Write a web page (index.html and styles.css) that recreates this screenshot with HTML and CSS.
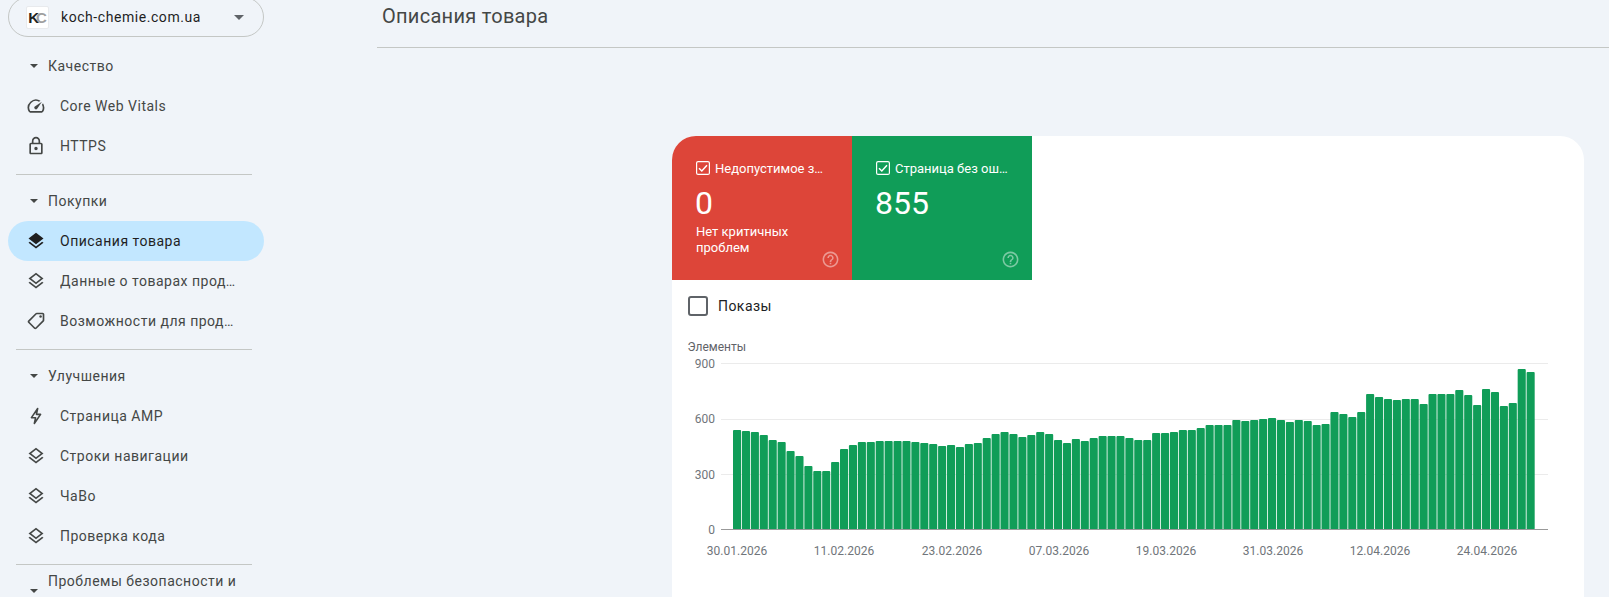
FILE: index.html
```html
<!DOCTYPE html>
<html lang="ru">
<head>
<meta charset="utf-8">
<title>Описания товара</title>
<link rel="stylesheet" href="styles.css">
</head>
<body>
<div class="page">
  <aside class="sidebar">
    <div class="property">
      <span class="logo"><b>K</b><i>C</i></span>
      <span class="property-name">koch-chemie.com.ua</span>
      <span class="property-caret"></span>
    </div>
    <nav class="nav">
      <div class="nav-head"><span class="caret"></span><span>Качество</span></div>
      <a class="nav-item"><svg class="icon" viewBox="0 0 24 24"><path d="M20.38 8.57l-1.23 1.85a8 8 0 0 1-.22 7.58H5.07A8 8 0 0 1 15.58 6.85l1.85-1.23A10 10 0 0 0 3.35 19a2 2 0 0 0 1.72 1h13.85a2 2 0 0 0 1.74-1 10 10 0 0 0-.27-10.44zm-9.79 6.84a2 2 0 0 0 2.83 0l5.66-8.49-8.49 5.66a2 2 0 0 0 0 2.83z"/></svg><span class="nav-text">Core Web Vitals</span></a>
      <a class="nav-item"><svg class="icon" viewBox="0 0 24 24"><path d="M18 8h-1V6c0-2.76-2.24-5-5-5S7 3.24 7 6v2H6c-1.1 0-2 .9-2 2v10c0 1.1.9 2 2 2h12c1.1 0 2-.9 2-2V10c0-1.1-.9-2-2-2zM9 6c0-1.66 1.34-3 3-3s3 1.34 3 3v2H9V6zm9 14H6V10h12v10zm-6-3c1.1 0 2-.9 2-2s-.9-2-2-2-2 .9-2 2 .9 2 2 2z"/></svg><span class="nav-text">HTTPS</span></a>
      <hr class="nav-rule">
      <div class="nav-head"><span class="caret"></span><span>Покупки</span></div>
      <a class="nav-item is-active"><svg class="icon" viewBox="0 0 24 24"><path d="M11.99 18.54l-7.37-5.73L3 14.07l9 7 9-7-1.63-1.27-7.38 5.74zM12 16l7.36-5.73L21 9l-9-7-9 7 1.63 1.27L12 16z"/></svg><span class="nav-text">Описания товара</span></a>
      <a class="nav-item"><svg class="icon" viewBox="0 0 24 24"><path d="M11.99 18.54l-7.37-5.73L3 14.07l9 7 9-7-1.63-1.27zM12 16l7.36-5.73L21 9l-9-7-9 7 1.63 1.27L12 16zm0-11.47L17.74 9 12 13.47 6.26 9 12 4.53z"/></svg><span class="nav-text">Данные о товарах продавца</span></a>
      <a class="nav-item"><svg class="icon" viewBox="0 0 24 24"><g transform="matrix(-1 0 0 1 24 0)"><path d="M21.41 11.41l-8.83-8.83C12.21 2.21 11.7 2 11.17 2H4c-1.1 0-2 .9-2 2v7.17c0 .53.21 1.04.59 1.41l8.83 8.83c.78.78 2.05.78 2.83 0l7.17-7.17c.78-.78.78-2.04-.01-2.83zM12.83 20L4 11.17V4h7.17L20 12.83 12.83 20z"/><circle cx="6.5" cy="6.5" r="1.5"/></g></svg><span class="nav-text">Возможности для продавцов</span></a>
      <hr class="nav-rule">
      <div class="nav-head"><span class="caret"></span><span>Улучшения</span></div>
      <a class="nav-item"><svg class="icon" viewBox="0 0 24 24"><path class="icon-line" d="M14 3 6.500 14h5l-1.500 7 7.500-11h-5z"/></svg><span class="nav-text">Страница AMP</span></a>
      <a class="nav-item"><svg class="icon" viewBox="0 0 24 24"><path d="M11.99 18.54l-7.37-5.73L3 14.07l9 7 9-7-1.63-1.27zM12 16l7.36-5.73L21 9l-9-7-9 7 1.63 1.27L12 16zm0-11.47L17.74 9 12 13.47 6.26 9 12 4.53z"/></svg><span class="nav-text">Строки навигации</span></a>
      <a class="nav-item"><svg class="icon" viewBox="0 0 24 24"><path d="M11.99 18.54l-7.37-5.73L3 14.07l9 7 9-7-1.63-1.27zM12 16l7.36-5.73L21 9l-9-7-9 7 1.63 1.27L12 16zm0-11.47L17.74 9 12 13.47 6.26 9 12 4.53z"/></svg><span class="nav-text">ЧаВо</span></a>
      <a class="nav-item"><svg class="icon" viewBox="0 0 24 24"><path d="M11.99 18.54l-7.37-5.73L3 14.07l9 7 9-7-1.63-1.27zM12 16l7.36-5.73L21 9l-9-7-9 7 1.63 1.27L12 16zm0-11.47L17.74 9 12 13.47 6.26 9 12 4.53z"/></svg><span class="nav-text">Проверка кода</span></a>
      <hr class="nav-rule">
      <div class="nav-head"><span class="caret"></span><span>Проблемы безопасности и меры, принятые вручную</span></div>
    </nav>
  </aside>

  <main class="main">
    <header class="title-bar"><h1 class="title">Описания товара</h1></header>
    <section class="card">
      <div class="tiles">
        <div class="tile tile-red">
          <div class="tile-label">
            <svg class="tick" viewBox="0 0 14 14"><rect x=".6" y=".6" width="12.800" height="12.800" rx="1.500"/><path d="M3 7.200 5.800 10 11 4.200"/></svg>
            <span class="tile-name">Недопустимое значение</span>
          </div>
          <div class="tile-value">0</div>
          <div class="tile-note">Нет критичных проблем</div>
          <svg class="help" viewBox="0 0 24 24"><path d="M11 18h2v-2h-2v2zm1-16C6.48 2 2 6.48 2 12s4.48 10 10 10 10-4.48 10-10S17.52 2 12 2zm0 18c-4.41 0-8-3.59-8-8s3.59-8 8-8 8 3.59 8 8-3.59 8-8 8zm0-14c-2.21 0-4 1.79-4 4h2c0-1.100.9-2 2-2s2 .9 2 2c0 2-3 1.750-3 5h2c0-2.250 3-2.500 3-5 0-2.210-1.790-4-4-4z"/></svg>
        </div>
        <div class="tile tile-green">
          <div class="tile-label">
            <svg class="tick" viewBox="0 0 14 14"><rect x=".6" y=".6" width="12.800" height="12.800" rx="1.500"/><path d="M3 7.200 5.800 10 11 4.200"/></svg>
            <span class="tile-name">Страница без ошибок</span>
          </div>
          <div class="tile-value">855</div>
          <svg class="help" viewBox="0 0 24 24"><path d="M11 18h2v-2h-2v2zm1-16C6.48 2 2 6.48 2 12s4.48 10 10 10 10-4.48 10-10S17.52 2 12 2zm0 18c-4.41 0-8-3.59-8-8s3.59-8 8-8 8 3.59 8 8-3.59 8-8 8zm0-14c-2.21 0-4 1.79-4 4h2c0-1.100.9-2 2-2s2 .9 2 2c0 2-3 1.750-3 5h2c0-2.250 3-2.500 3-5 0-2.210-1.790-4-4-4z"/></svg>
        </div>
      </div>
      <div class="metric"><span class="metric-box"></span><span class="metric-name">Показы</span></div>
      <svg class="chart" width="912" height="240" viewBox="0 0 912 240">
        <text class="chart-title" x="15.500" y="21">Элементы</text>
        <path class="grid" d="M49 33.500H876M49 89.500H876M49 144.500H876"/>
        <g class="bars">
          <rect x="61" y="100" width="8.100" height="99.500" rx="1"/>
          <rect x="69.920" y="101" width="8.100" height="98.500" rx="1"/>
          <rect x="78.830" y="102" width="8.100" height="97.500" rx="1"/>
          <rect x="87.750" y="105" width="8.100" height="94.500" rx="1"/>
          <rect x="96.670" y="110" width="8.100" height="89.500" rx="1"/>
          <rect x="105.590" y="112" width="8.100" height="87.500" rx="1"/>
          <rect x="114.500" y="121" width="8.100" height="78.500" rx="1"/>
          <rect x="123.420" y="126" width="8.100" height="73.500" rx="1"/>
          <rect x="132.340" y="136" width="8.100" height="63.500" rx="1"/>
          <rect x="141.250" y="141" width="8.100" height="58.500" rx="1"/>
          <rect x="150.170" y="141" width="8.100" height="58.500" rx="1"/>
          <rect x="159.090" y="132" width="8.100" height="67.500" rx="1"/>
          <rect x="168" y="119" width="8.100" height="80.500" rx="1"/>
          <rect x="176.920" y="115" width="8.100" height="84.500" rx="1"/>
          <rect x="185.830" y="112" width="8.100" height="87.500" rx="1"/>
          <rect x="194.750" y="112" width="8.100" height="87.500" rx="1"/>
          <rect x="203.670" y="111" width="8.100" height="88.500" rx="1"/>
          <rect x="212.590" y="111" width="8.100" height="88.500" rx="1"/>
          <rect x="221.500" y="111" width="8.100" height="88.500" rx="1"/>
          <rect x="230.420" y="111" width="8.100" height="88.500" rx="1"/>
          <rect x="239.340" y="112" width="8.100" height="87.500" rx="1"/>
          <rect x="248.250" y="113" width="8.100" height="86.500" rx="1"/>
          <rect x="257.170" y="114" width="8.100" height="85.500" rx="1"/>
          <rect x="266.090" y="116" width="8.100" height="83.500" rx="1"/>
          <rect x="275" y="115" width="8.100" height="84.500" rx="1"/>
          <rect x="283.920" y="117" width="8.100" height="82.500" rx="1"/>
          <rect x="292.830" y="114" width="8.100" height="85.500" rx="1"/>
          <rect x="301.750" y="113" width="8.100" height="86.500" rx="1"/>
          <rect x="310.670" y="108" width="8.100" height="91.500" rx="1"/>
          <rect x="319.590" y="104" width="8.100" height="95.500" rx="1"/>
          <rect x="328.500" y="102" width="8.100" height="97.500" rx="1"/>
          <rect x="337.420" y="104" width="8.100" height="95.500" rx="1"/>
          <rect x="346.340" y="107" width="8.100" height="92.500" rx="1"/>
          <rect x="355.250" y="105" width="8.100" height="94.500" rx="1"/>
          <rect x="364.170" y="102" width="8.100" height="97.500" rx="1"/>
          <rect x="373.090" y="104" width="8.100" height="95.500" rx="1"/>
          <rect x="382" y="110" width="8.100" height="89.500" rx="1"/>
          <rect x="390.920" y="113" width="8.100" height="86.500" rx="1"/>
          <rect x="399.830" y="109" width="8.100" height="90.500" rx="1"/>
          <rect x="408.750" y="111" width="8.100" height="88.500" rx="1"/>
          <rect x="417.670" y="108" width="8.100" height="91.500" rx="1"/>
          <rect x="426.590" y="106" width="8.100" height="93.500" rx="1"/>
          <rect x="435.500" y="106" width="8.100" height="93.500" rx="1"/>
          <rect x="444.420" y="106" width="8.100" height="93.500" rx="1"/>
          <rect x="453.340" y="108" width="8.100" height="91.500" rx="1"/>
          <rect x="462.250" y="110" width="8.100" height="89.500" rx="1"/>
          <rect x="471.170" y="110" width="8.100" height="89.500" rx="1"/>
          <rect x="480.090" y="103" width="8.100" height="96.500" rx="1"/>
          <rect x="489" y="103" width="8.100" height="96.500" rx="1"/>
          <rect x="497.920" y="102" width="8.100" height="97.500" rx="1"/>
          <rect x="506.830" y="100" width="8.100" height="99.500" rx="1"/>
          <rect x="515.750" y="100" width="8.100" height="99.500" rx="1"/>
          <rect x="524.670" y="98" width="8.100" height="101.500" rx="1"/>
          <rect x="533.590" y="95" width="8.100" height="104.500" rx="1"/>
          <rect x="542.500" y="95" width="8.100" height="104.500" rx="1"/>
          <rect x="551.420" y="95" width="8.100" height="104.500" rx="1"/>
          <rect x="560.340" y="90" width="8.100" height="109.500" rx="1"/>
          <rect x="569.250" y="91" width="8.100" height="108.500" rx="1"/>
          <rect x="578.170" y="90" width="8.100" height="109.500" rx="1"/>
          <rect x="587.090" y="89" width="8.100" height="110.500" rx="1"/>
          <rect x="596" y="88" width="8.100" height="111.500" rx="1"/>
          <rect x="604.920" y="90" width="8.100" height="109.500" rx="1"/>
          <rect x="613.830" y="92" width="8.100" height="107.500" rx="1"/>
          <rect x="622.750" y="90" width="8.100" height="109.500" rx="1"/>
          <rect x="631.670" y="91" width="8.100" height="108.500" rx="1"/>
          <rect x="640.590" y="95" width="8.100" height="104.500" rx="1"/>
          <rect x="649.500" y="94" width="8.100" height="105.500" rx="1"/>
          <rect x="658.420" y="82" width="8.100" height="117.500" rx="1"/>
          <rect x="667.340" y="84" width="8.100" height="115.500" rx="1"/>
          <rect x="676.250" y="87" width="8.100" height="112.500" rx="1"/>
          <rect x="685.170" y="82" width="8.100" height="117.500" rx="1"/>
          <rect x="694.090" y="64" width="8.100" height="135.500" rx="1"/>
          <rect x="703" y="67" width="8.100" height="132.500" rx="1"/>
          <rect x="711.920" y="69" width="8.100" height="130.500" rx="1"/>
          <rect x="720.830" y="70" width="8.100" height="129.500" rx="1"/>
          <rect x="729.750" y="69" width="8.100" height="130.500" rx="1"/>
          <rect x="738.670" y="69" width="8.100" height="130.500" rx="1"/>
          <rect x="747.590" y="74" width="8.100" height="125.500" rx="1"/>
          <rect x="756.500" y="64" width="8.100" height="135.500" rx="1"/>
          <rect x="765.420" y="64" width="8.100" height="135.500" rx="1"/>
          <rect x="774.340" y="64" width="8.100" height="135.500" rx="1"/>
          <rect x="783.250" y="60" width="8.100" height="139.500" rx="1"/>
          <rect x="792.170" y="65" width="8.100" height="134.500" rx="1"/>
          <rect x="801.090" y="75" width="8.100" height="124.500" rx="1"/>
          <rect x="810" y="59" width="8.100" height="140.500" rx="1"/>
          <rect x="818.920" y="62" width="8.100" height="137.500" rx="1"/>
          <rect x="827.830" y="76" width="8.100" height="123.500" rx="1"/>
          <rect x="836.750" y="73" width="8.100" height="126.500" rx="1"/>
          <rect x="845.670" y="39" width="8.100" height="160.500" rx="1"/>
          <rect x="854.590" y="42" width="8.100" height="157.500" rx="1"/>
        </g>
        <path class="axis" d="M49 199.500H876"/>
        <g class="y-labels">
          <text x="43" y="37.500">900</text>
          <text x="43" y="92.500">600</text>
          <text x="43" y="148.500">300</text>
          <text x="43" y="204">0</text>
        </g>
        <g class="x-labels">
          <text x="65" y="224.500">30.01.2026</text>
          <text x="172" y="224.500">11.02.2026</text>
          <text x="280" y="224.500">23.02.2026</text>
          <text x="387" y="224.500">07.03.2026</text>
          <text x="494" y="224.500">19.03.2026</text>
          <text x="601" y="224.500">31.03.2026</text>
          <text x="708" y="224.500">12.04.2026</text>
          <text x="815" y="224.500">24.04.2026</text>
        </g>
      </svg>
    </section>
  </main>
</div>
</body>
</html>
```
FILE: styles.css
```css
* { box-sizing: border-box; }
html, body { margin: 0; height: 597px; overflow: hidden; }
body { background: #f0f4f9; font-family: Roboto, "Noto Sans", sans-serif; color: #444746; }

.page { display: grid; grid-template-columns: 377px 1fr; height: 597px; overflow: hidden; }

/* sidebar */
.sidebar { padding: 0 0 0 8px; margin-top: -3px; }
.property {
  width: 256px; height: 40px; border: 1px solid #c4c7c5; border-radius: 20px;
  display: flex; align-items: center; padding-left: 17px;
  color: #1f1f1f; font-size: 14px;
}
.logo {
  width: 23px; height: 23px; background: #fff; border: 1px solid #e8eaed; border-radius: 2px;
  display: flex; align-items: center; justify-content: center;
  font-size: 15px; font-family: "Liberation Sans", sans-serif;
}
.logo b { color: #222; font-weight: 700; }
.logo i { color: #a0a0a0; font-style: normal; font-weight: 700; margin-left: -3px; }
.property-name { margin-left: 12px; font-weight: 400; letter-spacing: .56px; flex: 1; }
.property-caret { width: 0; height: 0; border: 5px solid transparent; border-top: 5px solid #5f6368; border-bottom: 0; margin-right: 19px; }

.nav { width: 256px; padding-top: 9px; font-size: 14px; letter-spacing: .5px; }
.nav-head { display: flex; align-items: center; min-height: 40px; padding-left: 22px; line-height: 20px; }
.caret { width: 0; height: 0; flex: none; border: 4px solid transparent; border-top: 4.500px solid #444746; border-bottom: 0; margin-right: 10px; }
.nav-item { display: flex; align-items: center; height: 40px; padding-left: 18px; border-radius: 20px; }
.nav-item.is-active { background: #c2e7ff; color: #1f1f1f; }
.icon { width: 20px; height: 20px; flex: none; fill: #444746; margin-right: 14px; }
.is-active .icon { fill: #1f1f1f; }
.icon-line { fill: none; stroke: #444746; stroke-width: 1.900; stroke-linejoin: round; }
.nav-text { width: 180px; white-space: nowrap; overflow: hidden; text-overflow: ellipsis; }
.nav-rule { border: 0; height: 1px; background: #c4c7c5; margin: 8px 12px 6px 8px; }

/* main */
.title-bar { height: 48px; border-bottom: 1px solid #c4c7c5; padding-left: 5px; }
.title { margin: 0; font-size: 20px; font-weight: 400; line-height: 33px; letter-spacing: .28px; color: #444746; }

.card {
  width: 912px; height: 600px; margin: 88px 0 0 295px; background: #fff;
  border-radius: 24px; overflow: hidden;
}
.tiles { display: flex; }
.tile { position: relative; width: 180px; height: 144px; padding: 24px 23px 0 24px; color: #fff; }
.tile-red { background: #dd4539; }
.tile-green { background: #109d58; }
.tile-label { display: flex; align-items: center; height: 16px; font-size: 13px; }
.tick { width: 14px; height: 14px; flex: none; margin-right: 5px; }
.tick rect { fill: none; stroke: #fff; stroke-width: 1.200; }
.tick path { fill: none; stroke: #fff; stroke-width: 1.500; }
.tile-name { white-space: nowrap; overflow: hidden; text-overflow: ellipsis; }
.tile-value { font-size: 32px; line-height: 36px; margin: 9px 0 -1px -1px; }
.tile-note { font-size: 13px; line-height: 16px; margin-top: 4px; width: 120px; }
.help { position: absolute; right: 12px; bottom: 11px; width: 19px; height: 19px; fill: #fff; opacity: .45; }

.metric { display: flex; align-items: center; height: 50px; padding: 2px 0 0 16px; }
.metric-box { width: 20px; height: 20px; border: 2px solid #5f6368; border-radius: 3px; margin-right: 10px; }
.metric-name { font-size: 14px; color: #202124; letter-spacing: .45px; }

.chart { display: block; font-family: Roboto, sans-serif; font-size: 12px; }
.chart-title { fill: #5f6368; }
.grid { fill: none; stroke: #ebebeb; stroke-width: 1; }
.axis { fill: none; stroke: #999; stroke-width: 1; }
.bars { fill: #109d58; }
.y-labels text { fill: #70757a; text-anchor: end; }
.x-labels text { fill: #70757a; text-anchor: middle; }
```
